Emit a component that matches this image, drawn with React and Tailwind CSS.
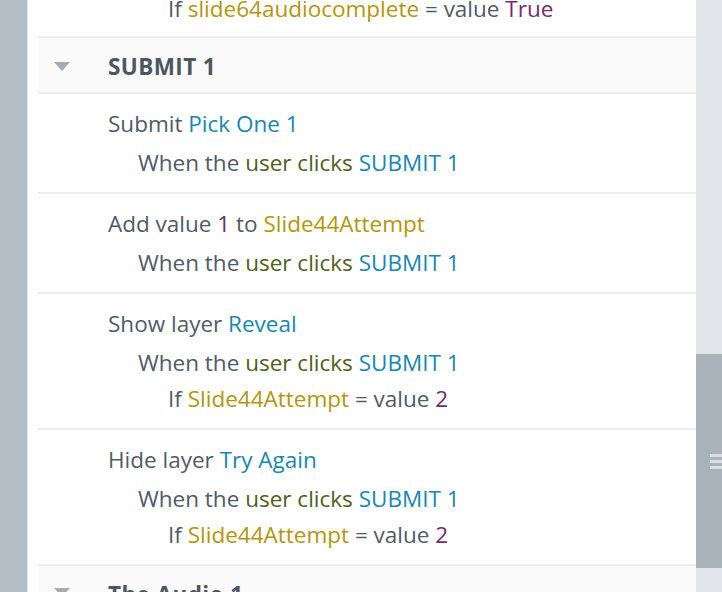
const C = {
  g: 'text-[#505b66]',
  b: 'text-[#1787b3]',
  o: 'text-[#4f6118]',
  y: 'text-[#b3960c]',
  p: 'text-[#742a72]',
};

function T({ c, children }) {
  return <span className={C[c]}>{children}</span>;
}

function Line({ level, children }) {
  const pad = level === 0 ? 'pl-[70px] mb-[3px]' : level === 1 ? 'pl-[100px]' : 'pl-[130px]';
  return <div className={`h-[36px] leading-[36px] whitespace-nowrap ${pad}`}>{children}</div>;
}

function Row({ children }) {
  return (
    <div className="border-t-2 border-[#ececec] pt-[12px] pb-[11px] flex flex-col">
      {children}
    </div>
  );
}

function Header({ label }) {
  return (
    <div className="border-t-2 border-[#ececec] bg-[#fafafa] h-[56px] pt-[3px] flex items-center shrink-0">
      <svg width="16" height="10" viewBox="0 0 16 10" className="ml-[16px]">
        <path d="M0 0 H16 L8 9 Z" fill="#a3abb3" />
      </svg>
      <span className="ml-[38px] font-bold text-[#4c5660] tracking-[0.4px]">{label}</span>
    </div>
  );
}

export default function App() {
  return (
    <div
      className="flex h-[592px] w-[722px] overflow-hidden bg-white text-[22.5px]"
      style={{ fontFamily: '"Segoe UI", "Open Sans", "Noto Sans", sans-serif' }}
    >
      <div className="w-[27px] shrink-0 bg-[#b4bec6]" />
      <div className="w-[1px] shrink-0 bg-[#dfe4e8]" />
      <div className="flex-1 pl-[10px] flex flex-col">
        <div className="mt-[-9px] pb-[9px]">
          <Line level={2}>
            <T c="g">If </T><T c="y">slide64audiocomplete</T><T c="g"> = value </T><T c="p">True</T>
          </Line>
        </div>
        <Header label="SUBMIT 1" />
        <Row>
          <Line level={0}><T c="g">Submit </T><T c="b">Pick One 1</T></Line>
          <Line level={1}><T c="g">When the </T><T c="o">user clicks </T><T c="b">SUBMIT 1</T></Line>
        </Row>
        <Row>
          <Line level={0}><T c="g">Add value </T><T c="p">1</T><T c="g"> to </T><T c="y">Slide44Attempt</T></Line>
          <Line level={1}><T c="g">When the </T><T c="o">user clicks </T><T c="b">SUBMIT 1</T></Line>
        </Row>
        <Row>
          <Line level={0}><T c="g">Show layer </T><T c="b">Reveal</T></Line>
          <Line level={1}><T c="g">When the </T><T c="o">user clicks </T><T c="b">SUBMIT 1</T></Line>
          <Line level={2}><T c="g">If </T><T c="y">Slide44Attempt</T><T c="g"> = value </T><T c="p">2</T></Line>
        </Row>
        <Row>
          <Line level={0}><T c="g">Hide layer </T><T c="b">Try Again</T></Line>
          <Line level={1}><T c="g">When the </T><T c="o">user clicks </T><T c="b">SUBMIT 1</T></Line>
          <Line level={2}><T c="g">If </T><T c="y">Slide44Attempt</T><T c="g"> = value </T><T c="p">2</T></Line>
        </Row>
        <div className="border-t-2 border-[#ececec] bg-[#fafafa] h-[56px] flex items-start shrink-0 pt-[15px]">
          <svg width="16" height="10" viewBox="0 0 16 10" className="ml-[16px] mt-[7px]">
            <path d="M0 0 H16 L8 9 Z" fill="#a3abb3" />
          </svg>
          <span className="ml-[38px] font-bold text-[#4c5660] leading-[28px] tracking-[0.4px]">The Audio 1</span>
        </div>
      </div>
      <div className="w-[26px] shrink-0 bg-[#e1e5e9] flex flex-col">
        <div className="mt-[354px] h-[214px] bg-[#a8b2bb] flex flex-col items-end justify-center gap-[3px]">
          <div className="h-[3px] w-[12px] bg-[#d9dee2]" />
          <div className="h-[3px] w-[12px] bg-[#d9dee2]" />
          <div className="h-[3px] w-[12px] bg-[#d9dee2]" />
        </div>
      </div>
    </div>
  );
}
